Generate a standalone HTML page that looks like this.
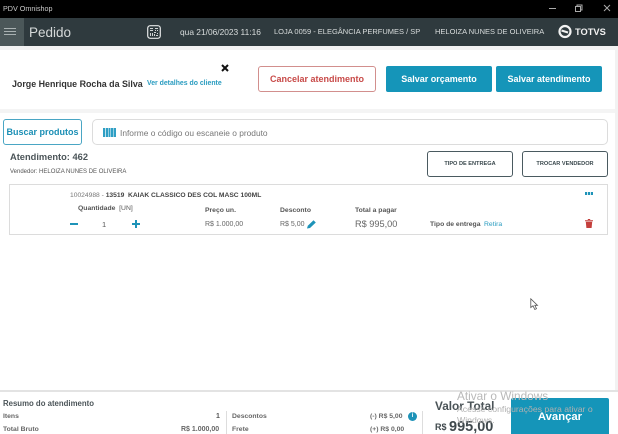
<!DOCTYPE html>
<html><head><meta charset="utf-8"><style>
html,body{margin:0;padding:0;background:#fff}
#p{position:relative;width:618px;height:434px;overflow:hidden;background:#fff;font-family:"Liberation Sans",sans-serif;color:#444}
#p div{position:absolute;white-space:nowrap;box-sizing:border-box}
.t{line-height:12px}
.btn{background:#1595b9;color:#fff;font-weight:bold;font-size:9px;text-align:center;border-radius:2px;line-height:26px;height:26px;top:66px}
.out{border:1px solid #4a5a60;border-radius:3px;color:#3a484d;font-weight:bold;font-size:5.600px;text-align:center;height:26px;top:151px;line-height:24px;width:86px}
</style></head><body><div id="p">
<div style="left:0;top:0;width:618px;height:18px;background:#000"></div>
<div class="t" style="left:3px;top:3px;font-size:7.200px;color:#ccc">PDV Omnishop</div>
<svg style="position:absolute;left:545px;top:0" width="73" height="18" fill="none" stroke="#aaa" stroke-width="1"><path d="M4 8.500H11"/><rect x="30.500" y="6.500" width="5" height="5"/><path d="M32 6V5H37V10H36"/><path d="M59 5L65 11M65 5L59 11"/></svg>
<div style="left:0;top:18px;width:618px;height:28px;background:#2f3a3e"></div>
<div style="left:0;top:18px;width:24px;height:28px;background:#4b5759"></div>
<div style="left:4px;top:28px;width:12px;height:1px;background:#a9b1b2"></div>
<div style="left:4px;top:31px;width:12px;height:1px;background:#a9b1b2"></div>
<div style="left:4px;top:34px;width:12px;height:1px;background:#a9b1b2"></div>
<div class="t" style="left:29px;top:27px;font-size:13.500px;color:#d5d9d9">Pedido</div>
<svg style="position:absolute;left:147px;top:25px" width="14" height="14" fill="none"><rect x=".7" y=".7" width="12.600" height="12.600" rx="2.500" stroke="#e4e6e6" stroke-width="1.200"/><path d="M3 3h3v1H3zM3 5h3v1H3zM8 3h3v1H8zM8 5h1v1H8zM10 5h1v1h-1zM3 8h1v3H3zM5 8h1v3H5zM7 7h2v1H7zM10 8h1v1h-1zM7 9h1v2H7zM9 10h2v1H9z" fill="#cfd3d3"/></svg>
<div class="t" style="left:180px;top:26px;font-size:8.400px;color:#d8dcdc">qua 21/06/2023 11:16</div>
<div class="t" style="left:274px;top:26px;font-size:7.500px;color:#d8dcdc">LOJA 0059 - ELEGÂNCIA PERFUMES / SP</div>
<div class="t" style="left:435px;top:26px;font-size:7.500px;color:#d8dcdc">HELOIZA NUNES DE OLIVEIRA</div>
<svg style="position:absolute;left:558px;top:24px" width="15" height="15" fill="none" stroke="#f2f2f2"><circle cx="7" cy="7.500" r="5.500" stroke-width="2.200"/><path d="M3.500 6.500L10 8.500" stroke-width="2"/></svg>
<div class="t" style="left:575px;top:26px;font-size:9.300px;font-weight:bold;color:#f2f2f2">TOTVS</div>

<div style="left:0;top:46px;width:618px;height:4px;background:#f2f2f2"></div>
<div style="left:0;top:109px;width:618px;height:4px;background:#f4f4f4"></div>
<div style="left:615px;top:46px;width:3px;height:345px;background:#f2f2f2"></div>

<svg style="position:absolute;left:221px;top:64px" width="8" height="8" stroke="#111" stroke-width="2"><path d="M1 1L7 7M7 1L1 7"/></svg>
<div class="t" style="left:12px;top:78px;font-size:8.900px;font-weight:bold;color:#333">Jorge Henrique Rocha da Silva</div>
<div class="t" style="left:147px;top:78px;font-size:6.900px;font-weight:bold;color:#2a9cc0">Ver detalhes do cliente</div>
<div style="left:258px;top:66px;width:118px;height:26px;border:1px solid #d28f8d;border-radius:3px;color:#c84a48;font-weight:bold;font-size:9px;text-align:center;line-height:24px">Cancelar atendimento</div>
<div class="btn" style="left:386px;width:106px">Salvar orçamento</div>
<div class="btn" style="left:496px;width:106px">Salvar atendimento</div>

<div style="left:3px;top:119px;width:79px;height:26px;border:1px solid #4aa6c4;border-radius:3px;color:#1b8fb5;font-weight:bold;font-size:9px;text-align:center;line-height:24px">Buscar produtos</div>
<div style="left:92px;top:119px;width:516px;height:26px;border:1px solid #dcdcdc;border-radius:5px"></div>
<svg style="position:absolute;left:103px;top:128px" width="13" height="9" fill="#2f9fc4"><path d="M0 0h2v9H0zM2.700 0h2.300v9H2.700zM5.500 0h1.500v9H5.500zM7.500 0h2.500v9H7.500zM10.500 0h2.500v9h-2.500z"/></svg>
<div class="t" style="left:120px;top:127px;font-size:8.400px;color:#777">Informe o código ou escaneie o produto</div>

<div class="t" style="left:10px;top:151px;font-size:9.300px;font-weight:bold;color:#4c5559">Atendimento: 462</div>
<div class="t" style="left:10px;top:166px;font-size:6px;color:#555">Vendedor: HELOIZA NUNES DE OLIVEIRA</div>
<div class="out" style="left:427px">TIPO DE ENTREGA</div>
<div class="out" style="left:522px">TROCAR VENDEDOR</div>

<div style="left:9px;top:184px;width:599px;height:51px;border:1px solid #dcdcdc"></div>
<div class="t" style="left:70px;top:190px;font-size:6.700px;color:#777">10024988 - <b style="color:#444">13519&nbsp; KAIAK CLASSICO DES COL MASC 100ML</b></div>
<div class="t" style="left:78px;top:203px;font-size:6.800px;color:#555"><b>Quantidade</b>&nbsp; [UN]</div>
<div style="left:70px;top:223px;width:8px;height:2px;background:#1e93b8"></div>
<div class="t" style="left:102px;top:219px;font-size:7.500px;color:#555">1</div>
<div style="left:132px;top:223px;width:8px;height:2px;background:#1e93b8"></div>
<div style="left:135px;top:220px;width:2px;height:8px;background:#1e93b8"></div>
<div class="t" style="left:205px;top:205px;font-size:6.800px;font-weight:bold;color:#555">Preço un.</div>
<div class="t" style="left:205px;top:219px;font-size:7px;color:#666">R$ 1.000,00</div>
<div class="t" style="left:280px;top:205px;font-size:6.800px;font-weight:bold;color:#555">Desconto</div>
<div class="t" style="left:280px;top:219px;font-size:7px;color:#666">R$ 5,00</div>
<svg style="position:absolute;left:307px;top:219px" width="10" height="10" fill="#1e93b8"><path d="M0 9.500L.8 6.800L6.500 1.200L8.800 3.500L3 9Z"/></svg>
<div class="t" style="left:355px;top:205px;font-size:6.800px;font-weight:bold;color:#555">Total a pagar</div>
<div class="t" style="left:355px;top:218px;font-size:9.200px;color:#666">R$ 995,00</div>
<div class="t" style="left:430px;top:219px;font-size:6.800px;font-weight:bold;color:#555">Tipo de entrega</div>
<div class="t" style="left:484px;top:219px;font-size:6.800px;color:#2a9cc0">Retira</div>
<svg style="position:absolute;left:585px;top:192px" width="8" height="3" fill="#1e93b8"><rect width="2.200" height="3"/><rect x="3" width="2.200" height="3"/><rect x="6" width="2" height="3"/></svg>
<svg style="position:absolute;left:585px;top:219px" width="8" height="9" fill="#c43f3c"><path d="M0 1.200h8v1H0zM2.800 0h2.400v1H2.800zM.8 2.800h6.400L6.600 9H1.400Z"/></svg>
<svg style="position:absolute;left:530px;top:298px" width="9" height="13" fill="#fff" stroke="#555" stroke-width=".8"><path d="M.8.800V9.500L3 7.800L4.800 11.500L6.500 10.700L4.800 7.300H7.500Z"/></svg>

<div style="left:0;top:390px;width:618px;height:1.500px;background:#e3e3e3"></div>
<div class="t" style="left:3px;top:398px;font-size:7.800px;font-weight:bold;color:#4c5559">Resumo do atendimento</div>
<div class="t" style="left:3px;top:411px;font-size:6.800px;font-weight:bold;color:#666">Itens</div>
<div class="t" style="left:216px;top:411px;font-size:7px;font-weight:bold;color:#555">1</div>
<div class="t" style="left:3px;top:424px;font-size:6.800px;font-weight:bold;color:#666">Total Bruto</div>
<div class="t" style="left:181px;top:424px;font-size:7px;font-weight:bold;color:#666">R$ 1.000,00</div>
<div style="left:226px;top:411px;width:1px;height:23px;background:#ddd"></div>
<div class="t" style="left:232px;top:411px;font-size:6.800px;font-weight:bold;color:#666">Descontos</div>
<div class="t" style="left:232px;top:424px;font-size:6.800px;font-weight:bold;color:#666">Frete</div>
<div class="t" style="left:370px;top:411px;font-size:6.800px;font-weight:bold;color:#666">(-) R$ 5,00</div>
<div class="t" style="left:370px;top:424px;font-size:6.800px;font-weight:bold;color:#666">(+) R$ 0,00</div>
<div style="left:408px;top:412px;width:9px;height:9px;border-radius:50%;background:#1e93b8;color:#fff;font-size:6px;font-weight:bold;text-align:center;line-height:9px">i</div>
<div style="left:422px;top:411px;width:1px;height:23px;background:#ddd"></div>
<div class="t" style="left:435px;top:400px;font-size:11.800px;font-weight:bold;color:#4a5357">Valor Total</div>
<div class="t" style="left:435px;top:421px;font-size:9px;font-weight:bold;color:#3f484c">R$</div>
<div class="t" style="left:449px;top:420px;font-size:14.500px;line-height:15px;font-weight:bold;color:#3f484c">995,00</div>
<div style="left:511px;top:398px;width:98px;height:36px;background:#1595b9;border-radius:2px 2px 0 0;color:#fff;font-weight:bold;font-size:11.300px;text-align:center;line-height:39px">Avançar</div>
<div class="t" style="left:457px;top:390px;font-size:11.800px;color:#b9b9b9">Ativar o Windows</div>
<div class="t" style="left:457px;top:403px;font-size:8.700px;color:#b0b0b0">Acesse configurações para ativar o</div>
<div class="t" style="left:457px;top:414px;font-size:8.700px;color:#b0b0b0">Windows.</div>
</div></body></html>
